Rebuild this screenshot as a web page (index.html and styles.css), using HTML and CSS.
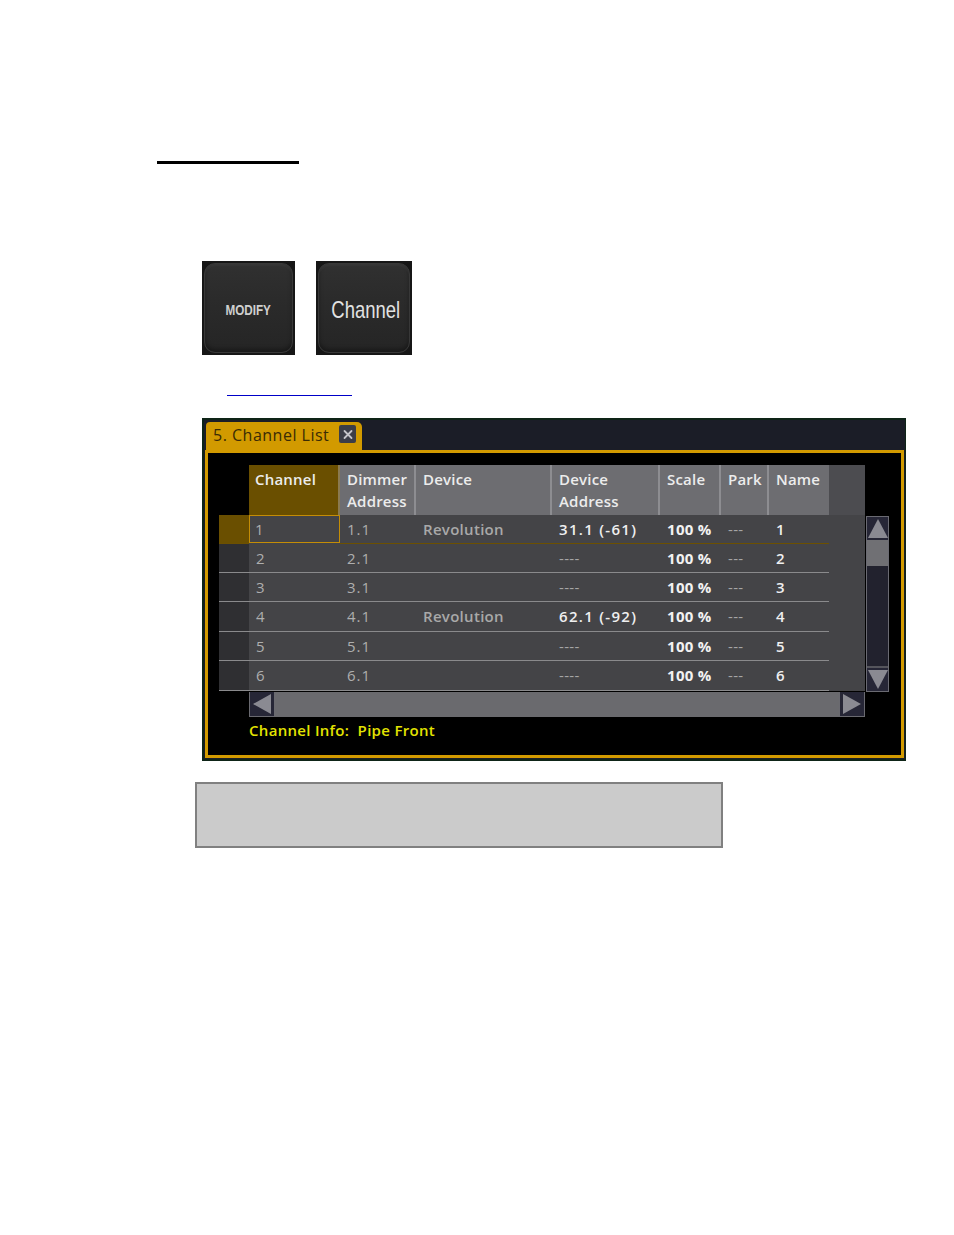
FILE: index.html
```html
<!DOCTYPE html>
<html>
<head>
<meta charset="utf-8">
<link rel="stylesheet" href="styles.css">
</head>
<body>
<div class="doc">
  <div class="rule"></div>
  <div class="keys">
    <div class="key"><div class="key-face"><span class="key-label small">MODIFY</span></div></div>
    <div class="key wide"><div class="key-face"><span class="key-label big">Channel</span></div></div>
  </div>
  <div class="link-line"></div>
  <div class="panel">
    <div class="tabbar">
      <div class="tab"><span class="tab-title">5. Channel List</span><span class="tab-close"><svg width="16" height="17" viewBox="0 0 16 17"><path d="M4.5 5 L11.5 12 M11.5 5 L4.5 12" stroke="#c4c4ca" stroke-width="1.8" stroke-linecap="round"/></svg></span></div>
    </div>
    <div class="frame">
      <div class="grid-wrap">
        <div class="table">
          <div class="row head">
            <div class="c corner"></div>
            <div class="c h sel">Channel</div>
            <div class="c h">Dimmer<br>Address</div>
            <div class="c h">Device</div>
            <div class="c h">Device<br>Address</div>
            <div class="c h">Scale</div>
            <div class="c h">Park</div>
            <div class="c h last">Name</div>
            <div class="c hx"></div>
          </div>
          <div class="row body first">
            <div class="c rh selrh"></div>
            <div class="c dim cur">1</div>
            <div class="c dim">1.1</div>
            <div class="c dimb">Revolution</div>
            <div class="c wh">31.1 (-61)</div>
            <div class="c whb">100 %</div>
            <div class="c dash">---</div>
            <div class="c wh">1</div>
            <div class="c ex"></div>
          </div>
          <div class="row body">
            <div class="c rh"></div>
            <div class="c dim">2</div>
            <div class="c dim">2.1</div>
            <div class="c dimb"></div>
            <div class="c dash">----</div>
            <div class="c whb">100 %</div>
            <div class="c dash">---</div>
            <div class="c wh">2</div>
            <div class="c ex"></div>
          </div>
          <div class="row body">
            <div class="c rh"></div>
            <div class="c dim">3</div>
            <div class="c dim">3.1</div>
            <div class="c dimb"></div>
            <div class="c dash">----</div>
            <div class="c whb">100 %</div>
            <div class="c dash">---</div>
            <div class="c wh">3</div>
            <div class="c ex"></div>
          </div>
          <div class="row body tall">
            <div class="c rh"></div>
            <div class="c dim">4</div>
            <div class="c dim">4.1</div>
            <div class="c dimb">Revolution</div>
            <div class="c wh">62.1 (-92)</div>
            <div class="c whb">100 %</div>
            <div class="c dash">---</div>
            <div class="c wh">4</div>
            <div class="c ex"></div>
          </div>
          <div class="row body">
            <div class="c rh"></div>
            <div class="c dim">5</div>
            <div class="c dim">5.1</div>
            <div class="c dimb"></div>
            <div class="c dash">----</div>
            <div class="c whb">100 %</div>
            <div class="c dash">---</div>
            <div class="c wh">5</div>
            <div class="c ex"></div>
          </div>
          <div class="row body tall">
            <div class="c rh"></div>
            <div class="c dim">6</div>
            <div class="c dim">6.1</div>
            <div class="c dimb"></div>
            <div class="c dash">----</div>
            <div class="c whb">100 %</div>
            <div class="c dash">---</div>
            <div class="c wh">6</div>
            <div class="c ex"></div>
          </div>
          <div class="hscroll">
            <div class="sbtn"><svg width="24" height="24" viewBox="0 0 24 24"><polygon points="21,2 21,22 3,12" fill="#8a8a92"/></svg></div>
            <div class="htrack"></div>
            <div class="sbtn"><svg width="24" height="24" viewBox="0 0 24 24"><polygon points="3,2 3,22 21,12" fill="#8a8a92"/></svg></div>
          </div>
        </div>
        <div class="vscroll">
          <div class="vbtn"><svg width="22" height="23" viewBox="0 0 22 23"><polygon points="1,21 21,21 11,2" fill="#8a8a92"/></svg></div>
          <div class="vthumb"></div>
          <div class="vtrack"></div>
          <div class="vbtn"><svg width="22" height="23" viewBox="0 0 22 23"><polygon points="1,2 21,2 11,21" fill="#8a8a92"/></svg></div>
        </div>
      </div>
      <div class="info">Channel Info:&nbsp; Pipe Front</div>
    </div>
  </div>
  <div class="graybox"></div>
</div>
</body>
</html>
```

FILE: styles.css
```css
html, body {
  margin: 0;
  padding: 0;
  background: #ffffff;
}
.doc {
  padding-top: 161px;
  font-family: "Open Sans", "DejaVu Sans", sans-serif;
}
.rule {
  margin-left: 157px;
  width: 142px;
  height: 3px;
  background: #000;
}
.keys {
  margin-top: 97px;
  margin-left: 202px;
  display: flex;
  gap: 21px;
}
.key {
  width: 93px;
  height: 94px;
  background: #161616;
  padding: 2px;
  box-sizing: border-box;
}
.key.wide {
  width: 96px;
}
.key-face {
  width: 100%;
  height: 100%;
  box-sizing: border-box;
  border-radius: 11px;
  border: 1px solid #383838;
  background: linear-gradient(#303030 0%, #2b2b2b 40%, #252525 100%);
  box-shadow: inset 0 2px 2px rgba(255,255,255,0.04), inset 0 -3px 4px rgba(0,0,0,0.35);
  display: flex;
  align-items: center;
  justify-content: center;
}
.key-label {
  font-family: "Liberation Sans", sans-serif;
  color: #d8d8d8;
  display: inline-block;
  white-space: nowrap;
}
.key-label.small {
  font-size: 15px;
  font-weight: 700;
  transform: scaleX(0.78);
  color: #cfcfcf;
  margin-top: 2px;
}
.key-label.big {
  font-size: 24px;
  transform: scaleX(0.77);
  margin-top: 4px;
  margin-left: 4px;
  color: #e2e2e2;
}
.link-line {
  margin-top: 40px;
  margin-left: 227px;
  width: 125px;
  height: 1px;
  background: #0000c8;
}
.panel {
  margin-top: 22px;
  margin-left: 202px;
  width: 704px;
  height: 343px;
  box-sizing: border-box;
  background: #1b1d27;
  border: 2px solid #0e2417;
  border-right-width: 1px;
  display: flex;
  flex-direction: column;
}
.tabbar {
  height: 30px;
  padding-left: 2px;
  padding-top: 2px;
  box-sizing: border-box;
  display: flex;
}
.tab {
  width: 156px;
  height: 28px;
  background: #d29a00;
  border-radius: 4px 5px 0 0;
  display: flex;
  align-items: center;
  padding-left: 7px;
  box-sizing: border-box;
  gap: 10px;
}
.tab-title {
  color: #3a2b05;
  font-size: 16px;
  letter-spacing: 0.5px;
  margin-top: -2px;
}
.tab-close {
  width: 17px;
  height: 18px;
  background: #3b3d48;
  border-radius: 2px;
  display: flex;
  align-items: center;
  justify-content: center;
  margin-top: -4px;
}
.tab-close svg {
  display: block;
}
.frame {
  flex: 1;
  margin-left: 1px;
  margin-right: 1px;
  margin-bottom: 1px;
  border: 3px solid #d29a00;
  background: #000;
  padding: 12px 0 0 11px;
  display: flex;
  flex-direction: column;
}
.grid-wrap {
  display: flex;
  align-items: flex-start;
  gap: 1px;
}
.table {
  width: 646px;
  display: flex;
  flex-direction: column;
}
.row {
  display: grid;
  grid-template-columns: 30px 91px 76px 136px 108px 61px 48px 60px 36px;
}
.row.head {
  height: 50px;
}
.c {
  box-sizing: border-box;
  padding-left: 7px;
  white-space: nowrap;
}
.corner {
  background: #000;
}
.h {
  background: #6d6d71;
  border-right: 2px solid #8d8d91;
  color: #ececec;
  font-weight: 600;
  font-size: 15px;
  line-height: 22px;
  padding-top: 3px;
  letter-spacing: 0.2px;
}
.h.sel {
  background: #6a4f00;
  padding-left: 6px;
  border-right-color: #8a7a50;
}
.h.last {
  border-right: none;
}
.hx {
  background: #4c4c50;
}
.row.body {
  height: 29px;
  background: #444447;
}
.row.body.tall {
  height: 30px;
}
.row.body .c {
  height: 29px;
  border-bottom: 1px solid #8a8a8c;
  line-height: 28px;
  font-size: 15px;
  letter-spacing: 0.3px;
}
.row.body.tall .c {
  height: 30px;
  line-height: 29px;
}
.row.body.first .c {
  border-bottom-color: #6c5000;
}
.row.body .c.ex {
  border-bottom: none;
}
.rh {
  background: #2f2f32;
}
.rh.selrh {
  background: #6a4f00;
}
.row.body .c.dim {
  color: #aeaeae;
  font-weight: 500;
  letter-spacing: 1px;
}
.row.body.first .c.cur {
  height: 28px;
  border: 1px solid #c48d06;
  padding-left: 5px;
  line-height: 26px;
}
.dimb {
  color: #a9a9a9;
  font-weight: 600;
}
.row.body .c.wh {
  color: #efefef;
  font-weight: 600;
  letter-spacing: 1.3px;
}
.whb {
  color: #f2f2f2;
  font-weight: 700;
  letter-spacing: 0.2px;
}
.dash {
  color: #a6a6a6;
}
.hscroll {
  margin-top: 1px;
  margin-left: 30px;
  height: 25px;
  display: flex;
  background: #6a6a6e;
}
.sbtn {
  width: 24px;
  height: 24px;
  background: #262636;
  border: 1px solid #6a6a70;
  border-top: none;
}
.sbtn svg {
  display: block;
}
.htrack {
  flex: 1;
}
.vscroll {
  margin-top: 51px;
  width: 23px;
  height: 176px;
  box-sizing: border-box;
  border: 1px solid #6a6a72;
  display: flex;
  flex-direction: column;
  background: #22222e;
}
.vbtn {
  height: 23px;
  background: #262636;
}
.vbtn svg {
  display: block;
}
.vthumb {
  height: 26px;
  background: #707074;
}
.vtrack {
  flex: 1;
  background: #22222e;
  border-bottom: 2px solid #55555c;
}
.info {
  margin-top: 3px;
  margin-left: 30px;
  color: #e3e300;
  font-weight: 600;
  font-size: 15px;
  letter-spacing: 0.3px;
}
.graybox {
  margin-top: 21px;
  margin-left: 195px;
  width: 528px;
  height: 66px;
  box-sizing: border-box;
  background: #cbcbcb;
  border: 2px solid #808080;
}
```
